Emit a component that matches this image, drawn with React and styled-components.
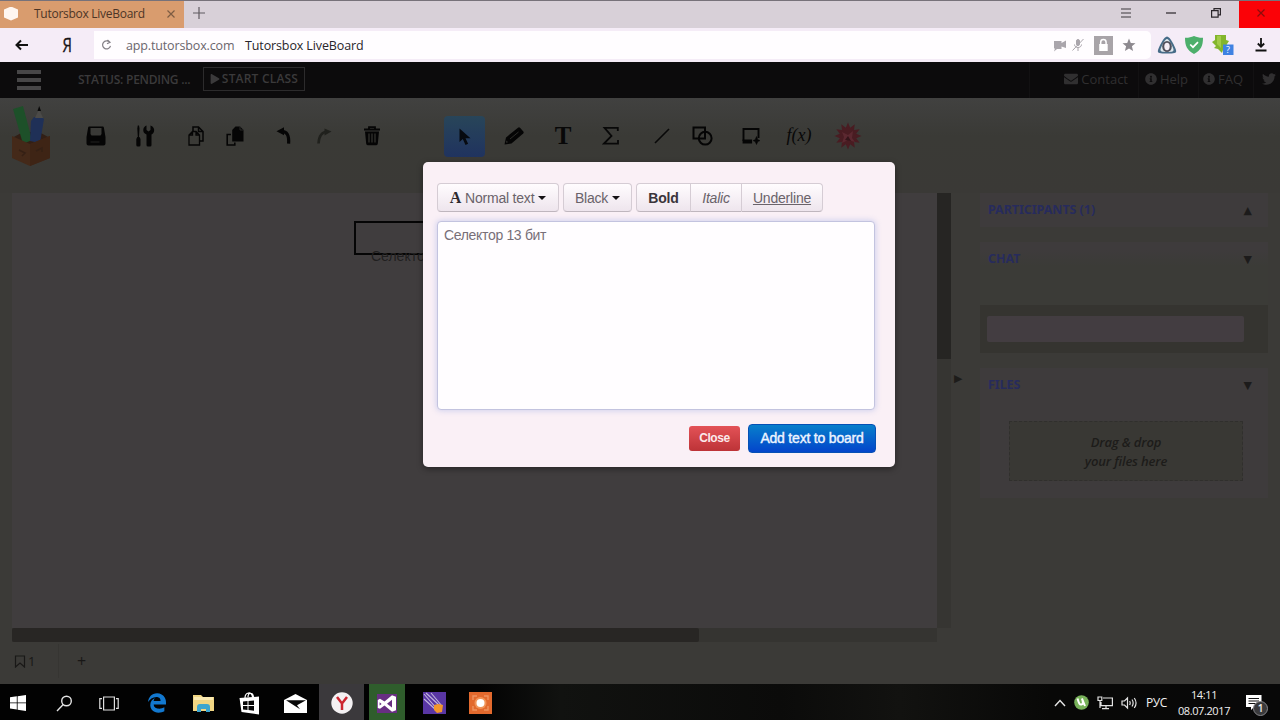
import React from 'react';
import styled, { createGlobalStyle } from 'styled-components';
import { FaInfoCircle, FaEnvelope, FaTwitter, FaPlay, FaEdgeLegacy } from 'react-icons/fa';

const GlobalStyle = createGlobalStyle`
  * {
    box-sizing: border-box;
  }

  body {
    margin: 0;
    overflow: hidden;
    font-family: 'Open Sans', 'Noto Sans', sans-serif;
  }

  svg {
    display: block;
    flex: none;
  }
`;

const ReloadIcon = () => (
  <svg width="12" height="12" viewBox="0 0 12 12" fill="none" stroke="#858187" strokeWidth="1.2">
    <path d="M8.500 3.200A4 4 0 1 0 9.500 6.800M6.500 1l2.500 2.400-3 1.300" />
  </svg>
);

const BackIcon = () => (
  <svg width="14" height="12" viewBox="0 0 14 12" fill="none" stroke="#111" strokeWidth="2">
    <path d="M13 6H2M6 1.500L1.500 6 6 10.500" />
  </svg>
);

const RestoreIcon = () => (
  <svg width="10" height="10" viewBox="0 0 10 10" fill="none" stroke="#2b262b" strokeWidth="1.2">
    <path d="M.6 2.600h6.500v6.500H.6zM3 2.600V.6h6.400v6.200H7.200" />
  </svg>
);

const CameraOffIcon = () => (
  <svg width="14" height="14" viewBox="0 0 14 14" fill="#aaa6ac">
    <path d="M1 3h7.500v2L13 2.500V10L8.500 8.500V11H4l-3 2.500 1-3H1z" />
  </svg>
);

const MicOffIcon = () => (
  <svg width="14" height="14" viewBox="0 0 14 14" fill="#aaa6ac" stroke="#aaa6ac">
    <rect x="5.500" y="1.500" width="3" height="6" rx="1.500" />
    <path d="M3.500 6.500c0 4 7 4 7 0M7 9.500v3.500M1.500 12.500L12.500 1" fill="none" />
  </svg>
);

const LockIcon = () => (
  <svg width="19" height="19" viewBox="0 0 19 19">
    <path d="M0 0h19v19H0z" fill="#a8a4a8" />
    <path d="M6.700 8V6.200a2.700 2.700 0 0 1 5.400 0V8" fill="none" stroke="#fff" strokeWidth="1.500" />
    <path d="M5.200 8h8.500v7H5.200z" fill="#fff" />
  </svg>
);

const StarIcon = () => (
  <svg width="14" height="14" viewBox="0 0 14 14" fill="#8d898f">
    <path d="M7 .500l1.800 4.400 4.700.4-3.600 3 1.200 4.700L7 10.500 2.900 13l1.200-4.700-3.600-3 4.700-.4z" />
  </svg>
);

const TriangleIcon = () => (
  <svg width="20" height="19" viewBox="0 0 20 19">
    <path d="M10 .500C7 .500 2 10.500 1 14s2 3.500 9 3.500 10 0 9-3.500S13 .500 10 .500z" fill="#466c88" />
    <path d="M10 3C8 3 4 11 3.500 13.500S7 16 10 16s7 0 6.500-2.500S12 3 10 3z" fill="#dfe8ee" />
    <ellipse cx="10" cy="10.500" rx="4.800" ry="5.600" fill="#50505c" />
    <ellipse cx="10" cy="10.500" rx="2.700" ry="3.700" fill="#f4edf6" />
  </svg>
);

const ShieldIcon = () => (
  <svg width="18" height="18" viewBox="0 0 18 18">
    <path d="M9 0c3 1.500 6 1.800 9 1.700 0 8-2 12.500-9 16.300C2 14.200 0 9.700 0 1.700 3 1.800 6 1.500 9 0z" fill="#4caf6b" />
    <path d="M5.200 8.500L8 11.200l5-5" fill="none" stroke="#fff" strokeWidth="1.700" />
  </svg>
);

const DownloaderIcon = () => (
  <svg width="23" height="20" viewBox="0 0 23 20">
    <path d="M4 0h11v5l3 1-2 3-2 6h-2l-1 3-4-4-4-1 2-2-4-4 3-2z" fill="#83b52c" />
    <path d="M6 1h4v12L6 9z" fill="#a2cb48" />
    <path d="M12 9.500h10.500V20H12z" fill="#3f82e2" />
    <text x="15" y="18" fontFamily="Open Sans, sans-serif" fontSize="9" fill="#fff">?</text>
  </svg>
);

const DownloadIcon = () => (
  <svg width="12" height="14" viewBox="0 0 12 14" fill="none" stroke="#111" strokeWidth="1.800">
    <path d="M6 0v8.500M2.800 5.500L6 8.700l3.200-3.200M.5 12.500h11" />
  </svg>
);

const BoxLogo = () => (
  <svg width="40" height="62" viewBox="0 0 40 62">
    <path d="M1 33l11-6h16l11 6-20 10z" fill="#321f15" />
    <path d="M2 4l10-3 9 34-9 4z" fill="#1d5029" />
    <path d="M20 16l3-4 9 1 1 1-4 24-10-2z" fill="#1f3057" />
    <path d="M24 13l4-9 4 9z" fill="#4b4a48" />
    <path d="M26.500 6l1.700-5L30 6z" fill="#090909" />
    <path d="M1 31l18 8 20-8v22L19 61 1 53z" fill="#442919" />
    <path d="M19 39l20-8v22L19 61z" fill="#3e2415" />
    <path d="M8 45l6 3-3 3M25 46l6-3v4" fill="none" stroke="#352015" strokeWidth="1.500" />
  </svg>
);

const SaveIcon = () => (
  <svg width="20" height="20" viewBox="0 0 20 20">
    <path d="M3.200.500h13.600a1 1 0 0 1 1 .8L19.500 11v6.500a2 2 0 0 1-2 2h-15a2 2 0 0 1-2-2V11L2.200 1.300a1 1 0 0 1 1-.8z" fill="#050505" />
    <path d="M4.500 2h11v6l-1 1.500h-9L4.500 8z" fill="#3a3a37" />
    <path d="M4.500 16h9" stroke="#232321" />
  </svg>
);

const ToolsIcon = () => (
  <svg width="20" height="22" viewBox="0 0 20 22" fill="#050505">
    <path d="M2.800.500h1.200l.5 3-.5 8.500h.500l1 2v6a1.500 1.500 0 0 1-1.500 1.500h-1.200A1.500 1.500 0 0 1 1.300 20v-6l1-2h.500L2.300 3.500z" />
    <path d="M11.500.500v4.500l2 1.500 2-1.500V.500C18.500 1.500 19.700 4 19 6.500c-.4 1.500-1.500 2.500-2.500 3V20a1.500 1.500 0 0 1-1.500 1.500h-2a1.500 1.500 0 0 1-1.500-1.500V9.500C9 8.500 8 6.500 8.300 4.500 8.500 2.500 10 1 11.500.500z" />
  </svg>
);

const CopyIcon = () => (
  <svg width="18" height="20" viewBox="0 0 18 20" fill="none" stroke="#050505" strokeWidth="1.500">
    <path d="M6 5V1h5.500L16 5.500V15h-3.500M11.500 1v4.500H16" />
    <path d="M5.500 5.500H9L12.500 9v10H2V9zM9 5.500V9h3.500M5.500 5.500V9H2" strokeWidth="1.300" />
  </svg>
);

const PasteIcon = () => (
  <svg width="18" height="20" viewBox="0 0 18 20">
    <path d="M9.500.500H14L17.500 4v11.500H6.200V4z" fill="#050505" />
    <path d="M14 .500V4h3.500" fill="none" stroke="#30302d" strokeWidth=".8" />
    <path d="M5 8.500H1.200V19h7.600v-2.500" fill="none" stroke="#050505" strokeWidth="1.600" />
  </svg>
);

const UndoIcon = () => (
  <svg width="18" height="20" viewBox="0 0 18 20">
    <path d="M1.500 5.300L9 1.300v8z" fill="#050505" />
    <path d="M6 5.300c6-.3 8.200 4 7.600 12.300" fill="none" stroke="#050505" strokeWidth="3.200" />
  </svg>
);

const RedoIcon = () => (
  <svg width="18" height="20" viewBox="0 0 18 20">
    <path d="M16.500 5.600l-7-3v7z" fill="#20211d" />
    <path d="M12 5.800C6.500 6 4 10 3.500 17.500" fill="none" stroke="#20211d" strokeWidth="2.600" />
  </svg>
);

const TrashIcon = () => (
  <svg width="18" height="20" viewBox="0 0 18 20">
    <path d="M1 3.500h16M6 3V1.200h6V3" fill="none" stroke="#050505" strokeWidth="1.800" />
    <path d="M2 5.500h14l-1.200 12.300a1.500 1.500 0 0 1-1.500 1.400H4.700a1.500 1.500 0 0 1-1.500-1.400z" fill="#050505" />
    <path d="M6 7.500v9M9 7.500v9M12 7.500v9" stroke="#3a3a36" strokeWidth="1.100" />
  </svg>
);

const PointerIcon = () => (
  <svg width="12" height="18" viewBox="0 0 12 18" fill="#070a10">
    <path d="M.5.500v13.500l3.300-3 2.700 6 2.600-1.200-2.600-5.500h5z" />
  </svg>
);

const PencilIcon = () => (
  <svg width="20" height="18" viewBox="0 0 20 18">
    <path d="M.500 17.500l1.500-7L14 .700a1.500 1.500 0 0 1 2 .1l3.300 3.700a1.500 1.500 0 0 1-.1 2L7.500 16.500z" fill="#050505" />
    <path d="M6 12L14.500 5" stroke="#31312e" strokeWidth=".9" fill="none" />
    <path d="M2 15.800l.500-2.300 1.500 1.800z" fill="#31312e" />
  </svg>
);

const SigmaIcon = () => (
  <svg width="18" height="20" viewBox="0 0 18 20" fill="none" stroke="#080808" strokeWidth="1.800">
    <path d="M15.800 5V1.900H2.500L9.500 10 2 17.600h14V14" />
  </svg>
);

const LineIcon = () => (
  <svg width="16" height="16" viewBox="0 0 16 16" stroke="#080808" strokeWidth="1.600">
    <path d="M1 15L15 1" />
  </svg>
);

const ShapesIcon = () => (
  <svg width="21" height="20" viewBox="0 0 21 20" fill="none" stroke="#050505" strokeWidth="2">
    <path d="M1.500 1.500h11.500v11H1.500z" />
    <circle cx="13.200" cy="12.200" r="6.400" />
  </svg>
);

const AreaIcon = () => (
  <svg width="18" height="18" viewBox="0 0 18 18">
    <path d="M1.500 14V2h15v9" fill="none" stroke="#050505" strokeWidth="1.900" />
    <path d="M.600 12.500h9.500v4H.600z" fill="#050505" />
    <path d="M14.500 9.500l1.300 3.200 2.200.9-2.200 1-1.300 2.900-1.300-2.900-2.200-1 2.200-.9z" fill="#050505" stroke="#050505" strokeWidth=".5" />
  </svg>
);

// twelve pointed star
const burstPoints = Array.from({ length: 24 }, (_, i) => {
  const r = i % 2 ? 8.500 : 13.500;
  const a = (i * Math.PI) / 12;
  return `${14 + r * Math.sin(a)},${14 - r * Math.cos(a)}`;
}).join(' ');

const BurstIcon = () => (
  <svg width="28" height="28" viewBox="0 0 28 28">
    <polygon points={burstPoints} fill="#491c22" />
    <path d="M8 10l6 3 5-4-1 7 3 4-7-2-6 3 2-6z" fill="#5b2830" />
    <path d="M11 18l3-4 3 5z" fill="#34151a" />
  </svg>
);

const BookmarkIcon = () => (
  <svg width="12" height="13" viewBox="0 0 12 13" fill="none" stroke="#191817" strokeWidth="1.200">
    <path d="M1.500 1h9v11L6 8l-4.500 4z" />
  </svg>
);

const WindowsIcon = () => (
  <svg width="16" height="16" viewBox="0 0 16 16" fill="#fff">
    <path d="M0 2.300l6.800-1v6.200H0zM7.600 1.200L16 0v7.500H7.600zM0 8.300h6.800v6.200L0 13.600zM7.600 8.300H16V16l-8.400-1.300z" />
  </svg>
);

const SearchIcon = () => (
  <svg width="17" height="17" viewBox="0 0 17 17" fill="none" stroke="#e4e4e4" strokeWidth="1.400">
    <circle cx="10.500" cy="6" r="4.800" />
    <path d="M7.200 9.600L1 16" />
  </svg>
);

const TaskViewIcon = () => (
  <svg width="20" height="15" viewBox="0 0 20 15" fill="none" stroke="#dedede" strokeWidth="1.200">
    <path d="M4.600 1h10.800v13H4.600zM3 2.600H.8v9.800H3M17 2.600h2.200v9.800H17" />
  </svg>
);

const FolderIcon = () => (
  <svg width="21" height="18" viewBox="0 0 21 18">
    <path d="M0 1h8l2 2h11v14H0z" fill="#f0d582" />
    <path d="M1 3h19v3H1z" fill="#fbeab2" />
    <path d="M4 18v-5q0-3 3-3h7q3 0 3 3v5h-4v-3H8v3z" fill="#3ca5cf" />
  </svg>
);

const StoreIcon = () => (
  <svg width="21" height="23" viewBox="0 0 21 23">
    <path d="M6 6C6 0 13-1 13.500 5M9 5c0-5 5-5 5.500 0" fill="none" stroke="#fff" strokeWidth="1.200" />
    <path d="M.500 6L20 4.500v18L2.500 20z" fill="#fff" />
    <path d="M4 9.500l4.500-.5v4H4zM9.500 9l5.500-.6V13H9.500zM4 14h4.500v4L4 17.500zM9.500 14H15v4.800l-5.500-.7z" fill="#080808" />
  </svg>
);

const MailIcon = () => (
  <svg width="23" height="19" viewBox="0 0 23 19">
    <path d="M0 6l11.500-6L23 6v13H0z" fill="#fff" />
    <path d="M2 6.200h20l-9 5 3 4z" fill="#080808" />
  </svg>
);

const YandexIcon = () => (
  <svg width="22" height="22" viewBox="0 0 22 22">
    <circle cx="11" cy="11" r="10.700" fill="#f4f1f3" />
    <path d="M6 5l5 6.500L16 5M11 11v7" fill="none" stroke="#cc2530" strokeWidth="2.500" />
  </svg>
);

const StudioIcon = () => (
  <svg width="22" height="21" viewBox="0 0 22 21">
    <path d="M1 1h20v19H1z" fill="#682f82" />
    <path d="M1.800 7v8l2.200.8 4.500-3.400 7.500 6.400 4-1.600V3.800l-4-1.600-7.500 6.400L4 5.800z" fill="#fff" />
    <path d="M3.600 9.200l2 1.700-2 1.600zM16 6.800v7.800l-5-3.900z" fill="#682f82" />
  </svg>
);

const MeteorIcon = () => (
  <svg width="23" height="22" viewBox="0 0 23 22">
    <path d="M0 0h23v22H0z" fill="#5936a4" />
    <path d="M1 2l13 15M1 7l12 11M3 1l14 13M8 1l11 13" stroke="#c2b6dd" strokeWidth="1.100" />
    <path d="M11 13l4-1 5 1-1 7-5 1-3-3z" fill="#f2962c" />
  </svg>
);

const RecorderIcon = () => (
  <svg width="23" height="22" viewBox="0 0 23 22">
    <path d="M0 0h23v22H0z" fill="#e2692d" />
    <path d="M4 8V4h4M15 4h4v4M19 14v4h-4M8 18H4v-4" fill="none" stroke="#ee935f" strokeWidth="1.400" />
    <circle cx="11.500" cy="11" r="6" fill="#f09458" />
    <circle cx="11.500" cy="11" r="4" fill="#fff" />
  </svg>
);

const ChevronIcon = () => (
  <svg width="12" height="8" viewBox="0 0 12 8" fill="none" stroke="#e6e6e6" strokeWidth="1.400">
    <path d="M1 7l5-5.500L11 7" />
  </svg>
);

const TorrentIcon = () => (
  <svg width="15" height="15" viewBox="0 0 15 15">
    <circle cx="7.500" cy="7.500" r="7.300" fill="#78b25a" />
    <path d="M3.500 3.500c1.500 5 2 6.500 4 6 2.500-.5 1-3.500.5-6l3 7.500" fill="none" stroke="#fff" strokeWidth="2" />
  </svg>
);

const NetworkIcon = () => (
  <svg width="16" height="14" viewBox="0 0 16 14" fill="none" stroke="#e3e3e3" strokeWidth="1.200">
    <path d="M6 2h9.400v7.600H4V6M1 1h3.800v3.500H1zM3 4.500V12M5 12.600h7M9 9.600v3" />
  </svg>
);

const SpeakerIcon = () => (
  <svg width="17" height="14" viewBox="0 0 17 14" fill="none" stroke="#e3e3e3" strokeWidth="1.200">
    <path d="M1 5h2.500L6.500 2v10l-3-3H1zM8.600 5q1.200 2 0 4M11 3.500q2.300 3.500 0 7M13.300 2q3.500 5 0 10" />
  </svg>
);

const NoticeIcon = () => (
  <svg width="16" height="16" viewBox="0 0 16 16">
    <path d="M0 0h15.500v12H8l-3 3v-3H0z" fill="#fff" />
    <path d="M2.500 3.500h10.500M2.500 6h10.500M2.500 8.500h7" stroke="#111" strokeWidth="1" />
  </svg>
);

const tools = [
  { name: 'save', icon: <SaveIcon />, gap: 26 },
  { name: 'settings', icon: <ToolsIcon />, gap: 11 },
  { name: 'copy', icon: <CopyIcon />, gap: 13 },
  { name: 'paste', icon: <PasteIcon />, gap: 1 },
  { name: 'undo', icon: <UndoIcon />, gap: 11 },
  { name: 'redo', icon: <RedoIcon />, gap: 2 },
  { name: 'trash', icon: <TrashIcon />, gap: 10 },
  { name: 'select', icon: <PointerIcon />, gap: 53, active: true },
  { name: 'pencil', icon: <PencilIcon />, gap: 10 },
  { name: 'text', label: 'T', gap: 11 },
  { name: 'sum', icon: <SigmaIcon />, gap: 10 },
  { name: 'line', icon: <LineIcon />, gap: 13 },
  { name: 'shapes', icon: <ShapesIcon />, gap: 2 },
  { name: 'area', icon: <AreaIcon />, gap: 11 },
  { name: 'function', label: 'f(x)', formula: true, gap: 10 },
  { name: 'wolfram', icon: <BurstIcon />, gap: 11 },
];

const apps = [
  { name: 'start', icon: <WindowsIcon />, width: 36 },
  { name: 'search', icon: <SearchIcon />, width: 56 },
  { name: 'tasks', icon: <TaskViewIcon />, width: 34 },
  { name: 'edge', icon: <FaEdgeLegacy size={20} color="#1278cf" />, width: 62 },
  { name: 'explorer', icon: <FolderIcon />, width: 30 },
  { name: 'store', icon: <StoreIcon />, width: 62 },
  { name: 'mail', icon: <MailIcon />, width: 31 },
  { name: 'yandex', icon: <YandexIcon />, width: 45, left: 8, bg: '#3b393c' },
  { name: 'studio', icon: <StudioIcon />, width: 36, left: 5, bg: '#2f5d2c' },
  { name: 'meteor', icon: <MeteorIcon />, width: 23, left: 18 },
  { name: 'recorder', icon: <RecorderIcon />, width: 23, left: 23 },
];

const BrowserChrome = () => (
  <>
    <TabBar>
      <Tab>
        <Favicon />
        <TabTitle>Tutorsbox LiveBoard</TabTitle>
        <TabClose>
          <svg width="8" height="8" viewBox="0 0 8 8" stroke="#7d5c43" strokeWidth="1.200">
            <path d="M.5.500l7 7M7.500.500l-7 7" />
          </svg>
        </TabClose>
      </Tab>
      <NewTab>
        <svg width="12" height="12" viewBox="0 0 12 12" stroke="#5f5a60" strokeWidth="1.200">
          <path d="M6 0v12M0 6h12" />
        </svg>
      </NewTab>
      <WindowButton>
        <svg width="10" height="10" viewBox="0 0 10 10" stroke="#3c383d" strokeWidth="1.200">
          <path d="M0 1h10M0 5h10M0 9h10" />
        </svg>
      </WindowButton>
      <WindowButton>
        <svg width="10" height="10" viewBox="0 0 10 10" stroke="#2b262b" strokeWidth="1.200">
          <path d="M0 5h10" />
        </svg>
      </WindowButton>
      <WindowButton>
        <RestoreIcon />
      </WindowButton>
      <CloseWindow>
        <svg width="8" height="8" viewBox="0 0 8 8" stroke="#8c0c0c" strokeWidth="1.200">
          <path d="M.5.500l7 7M7.500.500l-7 7" />
        </svg>
      </CloseWindow>
    </TabBar>
    <AddressBar>
      <BackIcon />
      <YandexLetter>Я</YandexLetter>
      <UrlField>
        <ReloadIcon />
        <Domain>app.tutorsbox.com</Domain>
        <PageTitle>Tutorsbox LiveBoard</PageTitle>
        <UrlIcons>
          <CameraOffIcon />
          <MicOffIcon />
          <LockIcon />
          <StarIcon />
        </UrlIcons>
      </UrlField>
      <Extensions>
        <TriangleIcon />
        <ShieldIcon />
        <DownloaderIcon />
      </Extensions>
      <DownloadIcon />
    </AddressBar>
  </>
);

const SidePanels = () => (
  <Side>
    <Panel $height={34}>
      <PanelHead>
        PARTICIPANTS (1)
        <Toggle>▲</Toggle>
      </PanelHead>
    </Panel>
    <Panel $height={63} $top={15} $chat>
      <PanelHead>
        CHAT
        <Toggle>▼</Toggle>
      </PanelHead>
    </Panel>
    <ChatForm>
      <ChatInput />
    </ChatForm>
    <Panel $height={130} $top={15}>
      <PanelHead>
        FILES
        <Toggle>▼</Toggle>
      </PanelHead>
      <DropZone>
        Drag &amp; drop
        <br />
        your files here
      </DropZone>
    </Panel>
  </Side>
);

const TextDialog = () => (
  <Dialog>
    <FormatBar>
      <FormatButton $width={122}>
        <FontLetter>A</FontLetter>
        Normal text
        <Caret />
      </FormatButton>
      <FormatButton $width={69}>
        Black
        <Caret />
      </FormatButton>
      <ButtonGroup>
        <GroupButton $width={54} $bold>Bold</GroupButton>
        <GroupButton $width={51} $italic>Italic</GroupButton>
        <GroupButton $width={82} $underline>Underline</GroupButton>
      </ButtonGroup>
    </FormatBar>
    <TextArea defaultValue="Селектор 13 бит" spellCheck={false} />
    <DialogFooter>
      <CloseButton>Close</CloseButton>
      <AddButton>Add text to board</AddButton>
    </DialogFooter>
  </Dialog>
);

const TaskBar = () => (
  <Task>
    {apps.map((app) => (
      <TaskItem key={app.name} $width={app.width} $left={app.left} $bg={app.bg}>
        {app.icon}
      </TaskItem>
    ))}
    <Tray>
      <ChevronIcon />
      <TorrentIcon />
      <NetworkIcon />
      <SpeakerIcon />
      <Language>РУС</Language>
      <Clock>
        <span>14:11</span>
        <span>08.07.2017</span>
      </Clock>
      <Notice>
        <NoticeIcon />
        <NoticeCount>1</NoticeCount>
      </Notice>
    </Tray>
  </Task>
);

const App = () => {
  return (
    <Screen>
      <GlobalStyle />
      <BrowserChrome />
      <Header>
        <Menu>
          <i />
          <i />
          <i />
        </Menu>
        <Status>STATUS: PENDING ...</Status>
        <StartButton>
          <FaPlay size={10} />
          START CLASS
        </StartButton>
        <Nav>
          <NavItem $width={109}><FaEnvelope size={14} />Contact</NavItem>
          <NavItem $width={60}><FaInfoCircle size={12} />Help</NavItem>
          <NavItem $width={55}><FaInfoCircle size={12} />FAQ</NavItem>
          <NavItem $width={27}><FaTwitter size={14} /></NavItem>
        </Nav>
      </Header>
      <ToolBar>
        <BoxLogo />
        {tools.map((tool) => (
          <Tool key={tool.name} $gap={tool.gap} $active={tool.active} $formula={tool.formula}>
            {tool.icon || tool.label}
          </Tool>
        ))}
      </ToolBar>
      <Workspace>
        <BoardColumn>
          <BoardRow>
            <Board>
              <TextFrame />
              <BoardText>Селектор 13 бит</BoardText>
            </Board>
            <VerticalTrack>
              <VerticalThumb />
            </VerticalTrack>
          </BoardRow>
          <HorizontalTrack>
            <HorizontalThumb />
          </HorizontalTrack>
          <Pages>
            <PageTab>
              <BookmarkIcon />
              1
            </PageTab>
            <AddPage>+</AddPage>
          </Pages>
        </BoardColumn>
        <Splitter>▶</Splitter>
        <SidePanels />
      </Workspace>
      <TaskBar />
      <TextDialog />
    </Screen>
  );
};

export default App;

const Screen = styled.div`
  position: relative;
  width: 1280px;
  height: 720px;
  display: flex;
  flex-direction: column;
  background: #3b3a37;
  overflow: hidden;
`;

const TabBar = styled.div`
  height: 28px;
  flex: none;
  display: flex;
  background: #d8d0d8;
  border-top: 1px solid #77727a;
`;

const Tab = styled.div`
  width: 184px;
  display: flex;
  align-items: center;
  padding: 0 9px 2px 4px;
  background: #d99c6e;
`;

const Favicon = styled.span`
  width: 14px;
  height: 14px;
  background: #fff6f0;
  clip-path: polygon(50% 0, 100% 22%, 100% 78%, 50% 100%, 0 78%, 0 22%);
`;

const TabTitle = styled.span`
  margin-left: 16px;
  font-size: 12px;
  letter-spacing: -0.27px;
  color: #4d3526;
  white-space: nowrap;
`;

const TabClose = styled.span`
  margin-left: auto;
`;

const NewTab = styled.div`
  flex: 1;
  display: flex;
  align-items: center;
  padding: 0 0 4px 9px;
`;

const WindowButton = styled.div`
  width: 45px;
  display: flex;
  align-items: center;
  justify-content: center;
  padding-bottom: 3px;
`;

const CloseWindow = styled(WindowButton)`
  width: 41px;
  margin-left: 1px;
  background: #fb0207;
  padding-left: 3px;
`;

const AddressBar = styled.div`
  height: 34px;
  flex: none;
  display: flex;
  align-items: center;
  padding: 0 13px 0 15px;
  background: #f5ecf7;
`;

const YandexLetter = styled.span`
  width: 12px;
  margin: 0 21px 0 32px;
  font-size: 20px;
  line-height: 28px;
  transform: scaleX(0.75);
  -webkit-text-stroke: 0.3px #161316;
  color: #161316;
`;

const UrlField = styled.div`
  width: 1057px;
  height: 28px;
  display: flex;
  align-items: center;
  padding: 0 15px 0 7px;
  background: #fffdff;
  border-radius: 0 5px 5px 0;
  font-size: 12.5px;
  white-space: nowrap;
`;

const Domain = styled.span`
  width: 108px;
  margin-left: 13px;
  letter-spacing: -0.14px;
  color: #6b666d;
`;

const PageTitle = styled.span`
  margin-left: 11px;
  letter-spacing: -0.12px;
  color: #29252a;
`;

const UrlIcons = styled.div`
  margin-left: auto;
  display: flex;
  align-items: center;
  gap: 9px;

  svg:nth-child(2) {
    margin: 0 0 0 -5px;
  }
`;

const Extensions = styled.div`
  display: flex;
  align-items: center;
  gap: 8px;
  margin: 0 auto 0 6px;
`;

const Header = styled.div`
  height: 36px;
  flex: none;
  display: flex;
  align-items: center;
  padding-left: 17px;
  background: #0c0b0c;
  color: #3b3a3b;
`;

const Menu = styled.div`
  width: 24px;
  display: flex;
  flex-direction: column;
  gap: 4px;

  i {
    height: 4px;
    background: #474647;
  }
`;

const Status = styled.span`
  width: 112px;
  margin: 0 0 2px 37px;
  font-size: 12px;
  font-weight: 600;
  letter-spacing: -0.25px;
  white-space: nowrap;
`;

const StartButton = styled.div`
  width: 102px;
  height: 24px;
  display: flex;
  align-items: center;
  justify-content: center;
  gap: 2px;
  margin: 0 0 3px 13px;
  border: 1px solid #2c2b2c;
  font-size: 12px;
  font-weight: 600;
  letter-spacing: 0.2px;
  white-space: nowrap;
`;

const Nav = styled.div`
  margin-left: auto;
  height: 100%;
  display: flex;
`;

const NavItem = styled.div`
  width: ${({ $width }) => $width}px;
  display: flex;
  align-items: center;
  justify-content: flex-end;
  gap: 3px;
  padding: 0 10px 3px 0;
  border-left: 1px solid #121112;
  font-size: 13px;
  color: #302f30;
  white-space: nowrap;

  &:last-child {
    padding-right: 4px;
  }
`;

const ToolBar = styled.div`
  height: 95px;
  flex: none;
  display: flex;
  align-items: flex-start;
  padding: 7px 0 0 11px;
  background: linear-gradient(#414140, #3a3a36 40%, #3a3936);
`;

const Tool = styled.div`
  width: ${({ $active }) => ($active ? 41 : 38)}px;
  height: 41px;
  flex: none;
  display: flex;
  align-items: center;
  justify-content: center;
  margin: 11px 0 0 ${({ $gap }) => $gap}px;
  padding-bottom: ${({ $active }) => ($active ? 0 : 2)}px;
  border-radius: 4px;
  background: ${({ $active }) => ($active ? 'linear-gradient(#284559, #20335f)' : 'transparent')};
  font-family: 'Liberation Serif', serif;
  font-size: ${({ $formula }) => ($formula ? 18 : 25)}px;
  font-weight: 700;
  font-weight: ${({ $formula }) => ($formula ? 400 : 700)};
  font-style: ${({ $formula }) => ($formula ? 'italic' : 'normal')};
  color: #080808;
`;

const Workspace = styled.div`
  flex: 1;
  min-height: 0;
  display: flex;
  padding-left: 12px;
`;

const BoardColumn = styled.div`
  width: 939px;
  display: flex;
  flex-direction: column;
`;

const BoardRow = styled.div`
  height: 435px;
  display: flex;
`;

const Board = styled.div`
  position: relative;
  width: 925px;
  background: #403d3e;
`;

const TextFrame = styled.div`
  position: absolute;
  left: 342px;
  top: 28px;
  width: 150px;
  height: 34px;
  border: 2px solid #050505;
`;

const BoardText = styled.span`
  position: absolute;
  left: 359px;
  top: 55px;
  font: 14px 'Liberation Sans', sans-serif;
  color: #201f1f;
`;

const VerticalTrack = styled.div`
  width: 14px;
  background: #363532;
`;

const VerticalThumb = styled.div`
  height: 166px;
  background: #262523;
`;

const HorizontalTrack = styled.div`
  width: 925px;
  height: 14px;
  background: #353431;
`;

const HorizontalThumb = styled.div`
  width: 687px;
  height: 14px;
  background: #282624;
  border-radius: 2px;
`;

const Pages = styled.div`
  height: 38px;
  display: flex;
  align-items: center;
  font-size: 13px;
  color: #181716;
`;

const PageTab = styled.div`
  width: 47px;
  height: 34px;
  display: flex;
  align-items: center;
  gap: 2px;
  padding-left: 2px;
  border-right: 1px solid #363532;
`;

const AddPage = styled.span`
  margin-left: 18px;
  font-size: 16px;
`;

const Splitter = styled.div`
  width: 29px;
  padding: 177px 0 0 3px;
  font: 11px 'DejaVu Sans', sans-serif;
  line-height: 18px;
  color: #1d1c1a;
`;

const Side = styled.div`
  width: 288px;
  display: flex;
  flex-direction: column;
`;

const Panel = styled.div`
  height: ${({ $height }) => $height}px;
  margin-top: ${({ $top }) => $top || 0}px;
  background: ${({ $chat }) => ($chat ? 'linear-gradient(#3e3b3c 8px, #3b3b37 24px)' : '#3e3b3c')};
`;

const PanelHead = styled.div`
  height: 32px;
  display: flex;
  align-items: center;
  justify-content: space-between;
  padding: 0 16px 0 8px;
  font-family: 'Noto Sans', sans-serif;
  font-size: 12.5px;
  font-weight: 700;
  letter-spacing: -0.05px;
  color: #272b5c;
`;

const Toggle = styled.span`
  padding-top: 3px;
  font: 11px 'DejaVu Sans', sans-serif;
  letter-spacing: 0;
  color: #1c1b1b;
`;

const ChatForm = styled.div`
  height: 48px;
  padding: 11px 0 0 7px;
  background: #353430;
`;

const ChatInput = styled.div`
  width: 257px;
  height: 26px;
  background: #433d41;
  border-radius: 2px;
`;

const DropZone = styled.div`
  width: 234px;
  height: 60px;
  margin: 21px 0 0 29px;
  padding-top: 11px;
  background: #393834;
  border: 1px dashed #302f2d;
  font-size: 13px;
  font-weight: 600;
  font-style: italic;
  line-height: 19px;
  letter-spacing: -0.15px;
  text-align: center;
  color: #1d1c1a;
`;

const Dialog = styled.div`
  position: absolute;
  left: 423px;
  top: 162px;
  width: 472px;
  height: 305px;
  padding: 21px 14px 0;
  background: #faf0f6;
  border-radius: 5px;
  box-shadow: 0 2px 6px rgba(0, 0, 0, 0.4);
  font-family: 'Liberation Sans', sans-serif;
`;

const FormatBar = styled.div`
  display: flex;
  gap: 4px;
`;

const FormatButton = styled.div`
  width: ${({ $width }) => $width}px;
  height: 29px;
  display: flex;
  align-items: center;
  justify-content: center;
  gap: 4px;
  border: 1px solid #d5ccd4;
  border-bottom-color: #bfb6be;
  border-radius: 4px;
  background: linear-gradient(#fffcfe, #eee5ed);
  font-size: 14px;
  letter-spacing: -0.2px;
  color: #6a636a;
  white-space: nowrap;
`;

const FontLetter = styled.b`
  font-family: 'Liberation Serif', serif;
  font-size: 16px;
  color: #2d292d;
`;

const Caret = styled.i`
  border: 4px solid transparent;
  border-top-color: #151215;
  border-bottom: 0;
`;

const ButtonGroup = styled.div`
  display: flex;
`;

const GroupButton = styled(FormatButton)`
  border-radius: 0;
  border-right-width: 0;
  color: ${({ $bold }) => ($bold ? '#3a343a' : '#6a636a')};
  font-weight: ${({ $bold }) => ($bold ? 700 : 400)};
  font-style: ${({ $italic }) => ($italic ? 'italic' : 'normal')};
  text-decoration: ${({ $underline }) => ($underline ? 'underline' : 'none')};

  &:first-child {
    border-radius: 4px 0 0 4px;
  }

  &:last-child {
    border-right-width: 1px;
    border-radius: 0 4px 4px 0;
  }
`;

const TextArea = styled.textarea`
  display: block;
  width: 438px;
  height: 189px;
  margin-top: 9px;
  padding: 5px 6px;
  resize: none;
  outline: none;
  overflow: hidden;
  border: 1px solid #c3c3df;
  border-radius: 4px;
  box-shadow: 0 0 6px rgba(130, 150, 225, 0.45);
  background: #fffdff;
  font: 14px 'Liberation Sans', sans-serif;
  letter-spacing: -0.33px;
  color: #786f78;
`;

const DialogFooter = styled.div`
  display: flex;
  align-items: center;
  justify-content: flex-end;
  gap: 8px;
  padding: 14px 5px 0 0;
`;

const CloseButton = styled.div`
  width: 51px;
  height: 25px;
  border-radius: 3px;
  background: linear-gradient(#e35257, #bd3337);
  font-size: 12px;
  font-weight: 700;
  letter-spacing: -0.4px;
  line-height: 24px;
  text-align: center;
  color: #fbe9ec;
`;

const AddButton = styled.div`
  width: 128px;
  height: 29px;
  border: 1px solid #0650b5;
  border-radius: 4px;
  background: linear-gradient(#087fcb, #0345cb);
  font-size: 14px;
  letter-spacing: -0.2px;
  -webkit-text-stroke: 0.4px #edf4ff;
  line-height: 27px;
  text-align: center;
  color: #edf4ff;
  white-space: nowrap;
`;

const Task = styled.div`
  height: 36px;
  flex: none;
  display: flex;
  background: linear-gradient(90deg, #020202 480px, #111210 560px, #0b0b0a 780px, #121210 900px, #080807 1050px, #080808);
`;

const TaskItem = styled.div`
  width: ${({ $width }) => $width}px;
  margin-left: ${({ $left }) => $left || 0}px;
  display: flex;
  align-items: center;
  justify-content: center;
  padding-top: 2px;
  background: ${({ $bg }) => $bg || 'transparent'};
`;

const Tray = styled.div`
  margin-left: auto;
  display: flex;
  align-items: center;
  gap: 8px;
  padding: 1px 18px 0 0;
  font-size: 12px;
  color: #f1f1f1;
`;

const Language = styled.span`
  width: 22px;
  font-size: 12px;
  letter-spacing: -0.5px;
`;

const Clock = styled.div`
  width: 54px;
  margin-left: 1px;
  display: flex;
  flex-direction: column;
  align-items: center;
  font-size: 11px;
  line-height: 16px;
  letter-spacing: -0.4px;
`;

const Notice = styled.div`
  position: relative;
  margin-left: 7px;
`;

const NoticeCount = styled.span`
  position: absolute;
  left: 7px;
  top: 6px;
  width: 15px;
  height: 15px;
  border: 1px solid #86868a;
  border-radius: 50%;
  background: #3a3a3c;
  font-size: 10px;
  font-weight: 600;
  line-height: 13px;
  text-align: center;
`;
